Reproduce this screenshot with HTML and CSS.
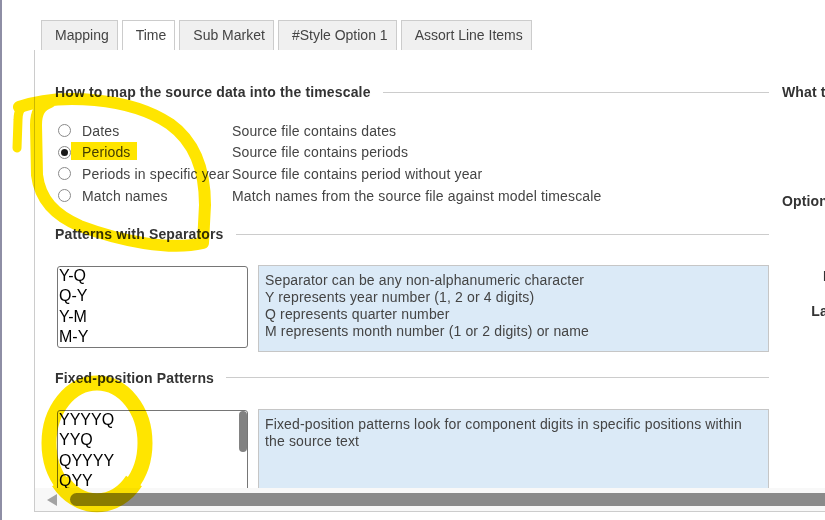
FILE: index.html
```html
<!DOCTYPE html>
<html lang="en">
<head>
<meta charset="utf-8">
<title>Time mapping</title>
<link rel="stylesheet" href="styles.css">
</head>
<body>
<div class="frame">
  <div class="tabs">
    <div class="tab">Mapping</div>
    <div class="tab active">Time</div>
    <div class="tab">Sub Market</div>
    <div class="tab">#Style Option 1</div>
    <div class="tab">Assort Line Items</div>
  </div>
  <div class="panel">
    <div class="viewport">
      <div class="columns">
        <div class="col-left">
          <div class="head">How to map the source data into the timescale</div>
          <div class="radios">
            <div class="rrow"><span class="radio"></span><span class="rlabel">Dates</span><span class="rdesc">Source file contains dates</span></div>
            <div class="rrow"><span class="radio checked"></span><span class="rlabel">Periods</span><span class="rdesc">Source file contains periods</span></div>
            <div class="rrow"><span class="radio"></span><span class="rlabel">Periods in specific year</span><span class="rdesc">Source file contains period without year</span></div>
            <div class="rrow"><span class="radio"></span><span class="rlabel">Match names</span><span class="rdesc">Match names from the source file against model timescale</span></div>
          </div>
          <div class="head sect">Patterns with Separators</div>
          <div class="boxrow">
            <div class="listbox">
              <div class="opts">
                <div class="opt">Y-Q</div>
                <div class="opt">Q-Y</div>
                <div class="opt">Y-M</div>
                <div class="opt">M-Y</div>
              </div>
            </div>
            <div class="info">
              Separator can be any non-alphanumeric character<br>
              Y represents year number (1, 2 or 4 digits)<br>
              Q represents quarter number<br>
              M represents month number (1 or 2 digits) or name
            </div>
          </div>
          <div class="head sect2">Fixed-position Patterns</div>
          <div class="boxrow second">
            <div class="listbox">
              <div class="opts">
                <div class="opt">YYYYQ</div>
                <div class="opt">YYQ</div>
                <div class="opt">QYYYY</div>
                <div class="opt">QYY</div>
              </div>
              <span class="vthumb"></span>
            </div>
            <div class="info">
              Fixed-position patterns look for component digits in specific positions within the source text
            </div>
          </div>
        </div>
        <div class="col-right">
          <div class="head">What to import</div>
          <div class="head opt-head">Options</div>
          <div class="form">
            <span class="flabel">Input</span><span></span>
            <span class="flabel">Layout</span><span></span>
          </div>
        </div>
      </div>
    </div>
    <div class="hscroll"><span class="harrow"></span><span class="hthumb"></span></div>
  </div>
</div>
<svg class="marks" viewBox="0 0 825 520" width="825" height="520" aria-hidden="true">
  <g fill="none" stroke="#ffe500" stroke-linecap="round" stroke-linejoin="round">
    <path stroke-width="12" d="M 19 107 C 60 93, 130 97, 170 124 C 198 144, 205 175, 205 205 L 203 243 C 170 251, 120 241, 80 226 C 55 215, 40 200, 37 175 L 36 125 C 36 112, 40 106, 50 102"/>
    <path stroke-width="9" d="M 17 148 L 18 120 C 18 112, 20 107, 26 105"/>
    <ellipse stroke-width="15" cx="97" cy="443" rx="48" ry="60"/>
    <path stroke-width="19" stroke-linecap="butt" d="M 60 481 A 48 60 0 0 0 134 481"/>
  </g>
  <rect x="71" y="142" width="66" height="18" fill="#ffe500"/>
</svg>
</body>
</html>
```
FILE: styles.css
```css
* { box-sizing: border-box; }

html, body {
  margin: 0;
  padding: 0;
  overflow: hidden;
  background: #fff;
}

body {
  width: 825px;
  height: 520px;
  position: relative;
  font-family: "Liberation Sans", Arial, sans-serif;
  font-size: 14px;
  color: #444;
  letter-spacing: 0.15px;
}

.frame {
  height: 520px;
  border-left: 2px solid #8e8ea5;
  padding-left: 32px;
  display: flex;
  flex-direction: column;
}

.tabs {
  display: flex;
  gap: 4px;
  margin-left: 7px;
  padding-top: 20px;
  letter-spacing: 0;
  flex: none;
}

.tab {
  height: 30px;
  line-height: 29px;
  padding: 0 8px 0 13px;
  border: 1px solid #cccccc;
  border-bottom: none;
  background: #f0f0f0;
  color: #444;
  white-space: nowrap;
}

.tab.active { background: #fff; }

.panel {
  width: 1100px;
  height: 462px;
  border-left: 1px solid #cccccc;
  border-bottom: 1px solid #cccccc;
  display: flex;
  flex-direction: column;
  flex: none;
}

.viewport {
  height: 438px;
  overflow: hidden;
  padding: 34px 0 0 20px;
  flex: none;
}

.columns {
  display: flex;
  gap: 13px;
}

.col-left { width: 714px; flex: none; }
.col-right { width: 300px; flex: none; }

.head {
  display: flex;
  align-items: center;
  gap: 12px;
  height: 16px;
  font-weight: bold;
  color: #333;
  white-space: nowrap;
}

.head::after {
  content: "";
  flex: 1;
  border-top: 1px solid #cccccc;
}

.radios { margin-top: 20px; }

.rrow {
  display: grid;
  grid-template-columns: 27px 150px auto;
  align-items: center;
  height: 21.6px;
  white-space: nowrap;
}

.radio {
  width: 13px;
  height: 13px;
  margin-left: 3px;
  border: 1px solid #8a8a8a;
  border-radius: 50%;
  background: #fff;
  display: flex;
  align-items: center;
  justify-content: center;
}

.radio.checked::after {
  content: "";
  width: 7px;
  height: 7px;
  border-radius: 50%;
  background: #1a1a1a;
}

.head.sect { margin-top: 20px; }
.head.sect2 { margin-top: 18px; }

.boxrow {
  display: flex;
  align-items: flex-start;
  margin-top: 22.4px;
}

.boxrow.second { margin-top: 23px; }

.listbox {
  width: 191px;
  height: 82px;
  margin: 1px 0 0 2px;
  border: 1px solid #767676;
  border-radius: 3px;
  background: #fff;
  overflow: hidden;
  position: relative;
  flex: none;
}

.opts {
  margin-top: -1px;
  padding-left: 1px;
}

.opt {
  font-size: 16px;
  line-height: 20.4px;
  color: #000;
  letter-spacing: 0;
  white-space: nowrap;
}

.vthumb {
  position: absolute;
  right: 0;
  top: 0;
  width: 8px;
  height: 41px;
  border-radius: 4px;
  background: #828282;
}

.info {
  margin-left: 10px;
  width: 511px;
  height: 87px;
  background: #dbeaf7;
  border: 1px solid #c6c6c6;
  padding: 6px;
  line-height: 17px;
  color: #444;
  flex: none;
}

.opt-head { margin-top: 93px; }

.form {
  margin-top: 56.7px;
  display: grid;
  grid-template-columns: 76px 1fr;
  row-gap: 15px;
}

.flabel {
  text-align: right;
  font-weight: bold;
  color: #333;
  height: 20px;
  line-height: 20px;
}

.hscroll {
  height: 23px;
  background: #f8f8f8;
  display: flex;
  align-items: center;
  padding-left: 12px;
  flex: none;
}

.harrow {
  width: 0;
  height: 0;
  border-top: 6px solid transparent;
  border-bottom: 6px solid transparent;
  border-right: 10px solid #a3a3a3;
}

.hthumb {
  margin-left: 13px;
  margin-right: 20px;
  height: 13px;
  flex: 1;
  border-radius: 7px;
  background: #8a8a8a;
}

.marks {
  position: absolute;
  left: 0;
  top: 0;
  width: 825px;
  height: 520px;
  mix-blend-mode: multiply;
  pointer-events: none;
}
```
